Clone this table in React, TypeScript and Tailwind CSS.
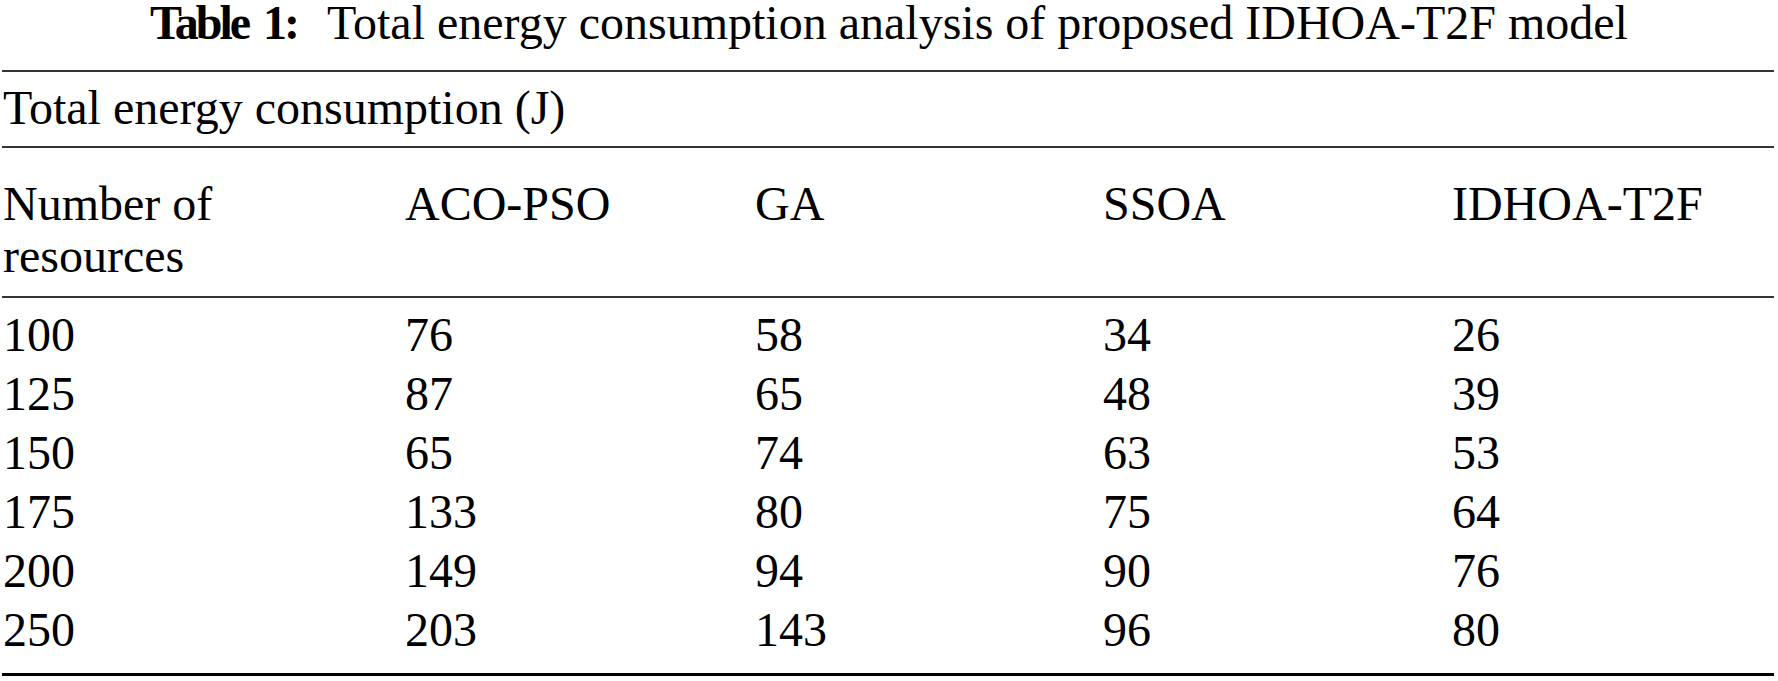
const headers = ["ACO-PSO", "GA", "SSOA", "IDHOA-T2F"];

const rows = [
  ["100", "76", "58", "34", "26"],
  ["125", "87", "65", "48", "39"],
  ["150", "65", "74", "63", "53"],
  ["175", "133", "80", "75", "64"],
  ["200", "149", "94", "90", "76"],
  ["250", "203", "143", "96", "80"],
];

export default function App() {
  return (
    <div className="w-[1778px] h-[681px] bg-white text-black font-['Liberation_Serif','Times_New_Roman',serif] text-[48px]">
      {/* Caption */}
      <h1 className="h-[70px] pt-[2px] text-center leading-[42px] font-normal whitespace-nowrap">
        <span className="font-bold tracking-[-3px] [word-spacing:6px]">Table 1:</span>
        <span className="ml-[30px]">Total energy consumption analysis of proposed IDHOA-T2F model</span>
      </h1>

      <div className="ml-[2px] mr-[4px]">
        {/* Group heading */}
        <div className="border-t-2 border-[#333] pt-[6px] pb-[8px] pl-[1px] leading-[60px]">
          Total energy consumption (J)
        </div>

        {/* Column headings */}
        <div className="grid grid-cols-[402px_350px_348px_349px_1fr] border-t-2 border-[#333] pt-[30px] pb-[14px] pl-[1px] leading-[52px]">
          <div>
            Number of
            <br />
            resources
          </div>
          {headers.map((h) => (
            <div key={h}>{h}</div>
          ))}
        </div>

        {/* Data */}
        <div className="border-t-2 border-[#333] border-b-[3px] border-b-black pt-[7px] pb-[14px] pl-[1px] leading-[59px]">
          {rows.map((r) => (
            <div key={r[0]} className="grid grid-cols-[402px_350px_348px_349px_1fr]">
              {r.map((v, i) => (
                <div key={i}>{v}</div>
              ))}
            </div>
          ))}
        </div>
      </div>
    </div>
  );
}
